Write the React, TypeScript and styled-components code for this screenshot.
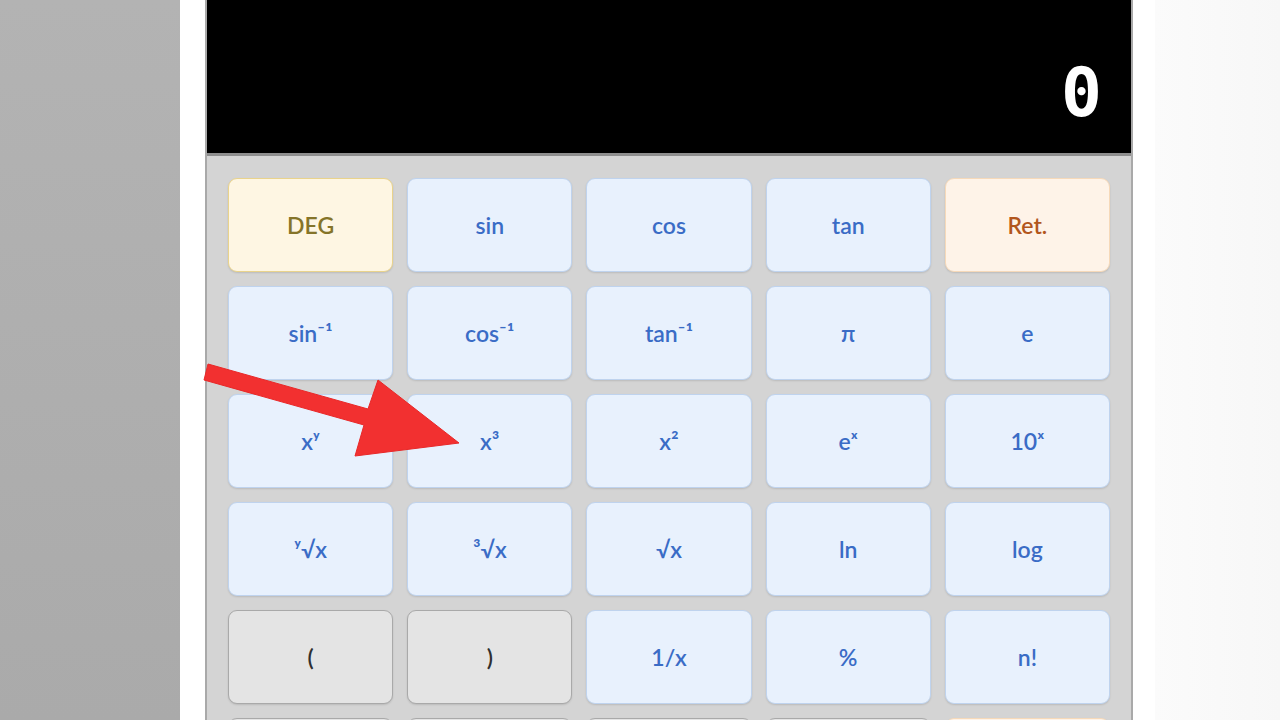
import * as React from 'react';
import styled, { createGlobalStyle, css } from 'styled-components';

const GlobalStyle = createGlobalStyle`
  html, body {
    margin: 0;
    padding: 0;
    height: 100%;
    overflow: hidden;
  }
  body {
    font-family: Lato, 'Noto Sans', sans-serif;
  }
`;

const Page = styled.div`
  position: relative;
  display: flex;
  width: 1280px;
  height: 720px;
  overflow: hidden;
`;

const LeftGutter = styled.div`
  width: 180px;
  flex-shrink: 0;
  background: linear-gradient(180deg, #b3b3b3 0%, #aaaaaa 100%);
`;

const RightGutter = styled.div`
  width: 125px;
  flex-shrink: 0;
  background: linear-gradient(90deg, #fbfbfb 0%, #f7f7f7 100%);
`;

const Center = styled.main`
  flex: 1;
  background: #ffffff;
  padding: 0 22px 0 25px;
  display: flex;
  align-items: flex-start;
`;

const Calculator = styled.section`
  flex: 1;
  display: flex;
  flex-direction: column;
  border-left: 2px solid #a9a9a9;
  border-right: 2px solid #a9a9a9;
  background: #d4d4d4;
`;

const Display = styled.div`
  flex-shrink: 0;
  height: 156px;
  box-sizing: border-box;
  background: #000;
  border-bottom: 3px solid #8e8e8e;
  display: flex;
  justify-content: flex-end;
  align-items: flex-end;
  padding: 0 29px 26px;
`;

const Readout = styled.span`
  color: #fff;
  font-family: 'DejaVu Sans Mono', 'Liberation Mono', monospace;
  font-weight: bold;
  font-size: 68px;
  line-height: 68px;
`;

const Keypad = styled.div`
  flex-shrink: 0;
  display: grid;
  grid-template-columns: repeat(5, 1fr);
  grid-auto-rows: 94px;
  gap: 14px;
  padding: 22px 21px;
`;

type Tone = 'blue' | 'yellow' | 'orange' | 'gray';

const tones: Record<Tone, ReturnType<typeof css>> = {
  blue: css`
    background: #e8f1fd;
    border-color: #bfd3ee;
    color: #3a6cc6;
  `,
  yellow: css`
    background: #fef6e3;
    border-color: #e9d38c;
    color: #857429;
  `,
  orange: css`
    background: #fef3e8;
    border-color: #f6d9b9;
    color: #b2561d;
  `,
  gray: css`
    background: #e4e4e4;
    border-color: #a9a9a9;
    color: #2f2f2f;
  `,
};

const Key = styled.button<{ $tone: Tone }>`
  box-sizing: border-box;
  border: 1px solid;
  border-radius: 9px;
  font-family: Lato, 'Noto Sans', 'DejaVu Sans', sans-serif;
  font-size: 23px;
  font-weight: 600;
  display: flex;
  align-items: center;
  justify-content: center;
  box-shadow: 0 1px 2px rgba(0, 0, 0, 0.12);
  ${({ $tone }) => tones[$tone]}
`;

const Arrow = styled.svg`
  position: absolute;
  left: 0;
  top: 0;
  pointer-events: none;
`;

const keys: { label: string; tone: Tone }[] = [
  { label: 'DEG', tone: 'yellow' },
  { label: 'sin', tone: 'blue' },
  { label: 'cos', tone: 'blue' },
  { label: 'tan', tone: 'blue' },
  { label: 'Ret.', tone: 'orange' },
  { label: 'sin⁻¹', tone: 'blue' },
  { label: 'cos⁻¹', tone: 'blue' },
  { label: 'tan⁻¹', tone: 'blue' },
  { label: 'π', tone: 'blue' },
  { label: 'e', tone: 'blue' },
  { label: 'xʸ', tone: 'blue' },
  { label: 'x³', tone: 'blue' },
  { label: 'x²', tone: 'blue' },
  { label: 'eˣ', tone: 'blue' },
  { label: '10ˣ', tone: 'blue' },
  { label: 'ʸ√x', tone: 'blue' },
  { label: '³√x', tone: 'blue' },
  { label: '√x', tone: 'blue' },
  { label: 'ln', tone: 'blue' },
  { label: 'log', tone: 'blue' },
  { label: '(', tone: 'gray' },
  { label: ')', tone: 'gray' },
  { label: '1/x', tone: 'blue' },
  { label: '%', tone: 'blue' },
  { label: 'n!', tone: 'blue' },
  { label: '7', tone: 'gray' },
  { label: '8', tone: 'gray' },
  { label: '9', tone: 'gray' },
  { label: 'DEL', tone: 'gray' },
  { label: 'AC', tone: 'orange' },
];

export default function App() {
  return (
    <>
      <GlobalStyle />
      <Page>
        <LeftGutter />
        <Center>
          <Calculator>
            <Display>
              <Readout>0</Readout>
            </Display>
            <Keypad>
              {keys.map((k) => (
                <Key key={k.label} $tone={k.tone}>
                  {k.label}
                </Key>
              ))}
            </Keypad>
          </Calculator>
        </Center>
        <RightGutter />
        <Arrow width='1280' height='720' viewBox='0 0 1280 720'>
          <polygon
            points='208,364 368,409 378,380 459,443 355,456 364,425 204,380'
            fill='#f23030'
            stroke='#e82828'
            strokeWidth='1'
            strokeLinejoin='round'
          />
        </Arrow>
      </Page>
    </>
  );
}
